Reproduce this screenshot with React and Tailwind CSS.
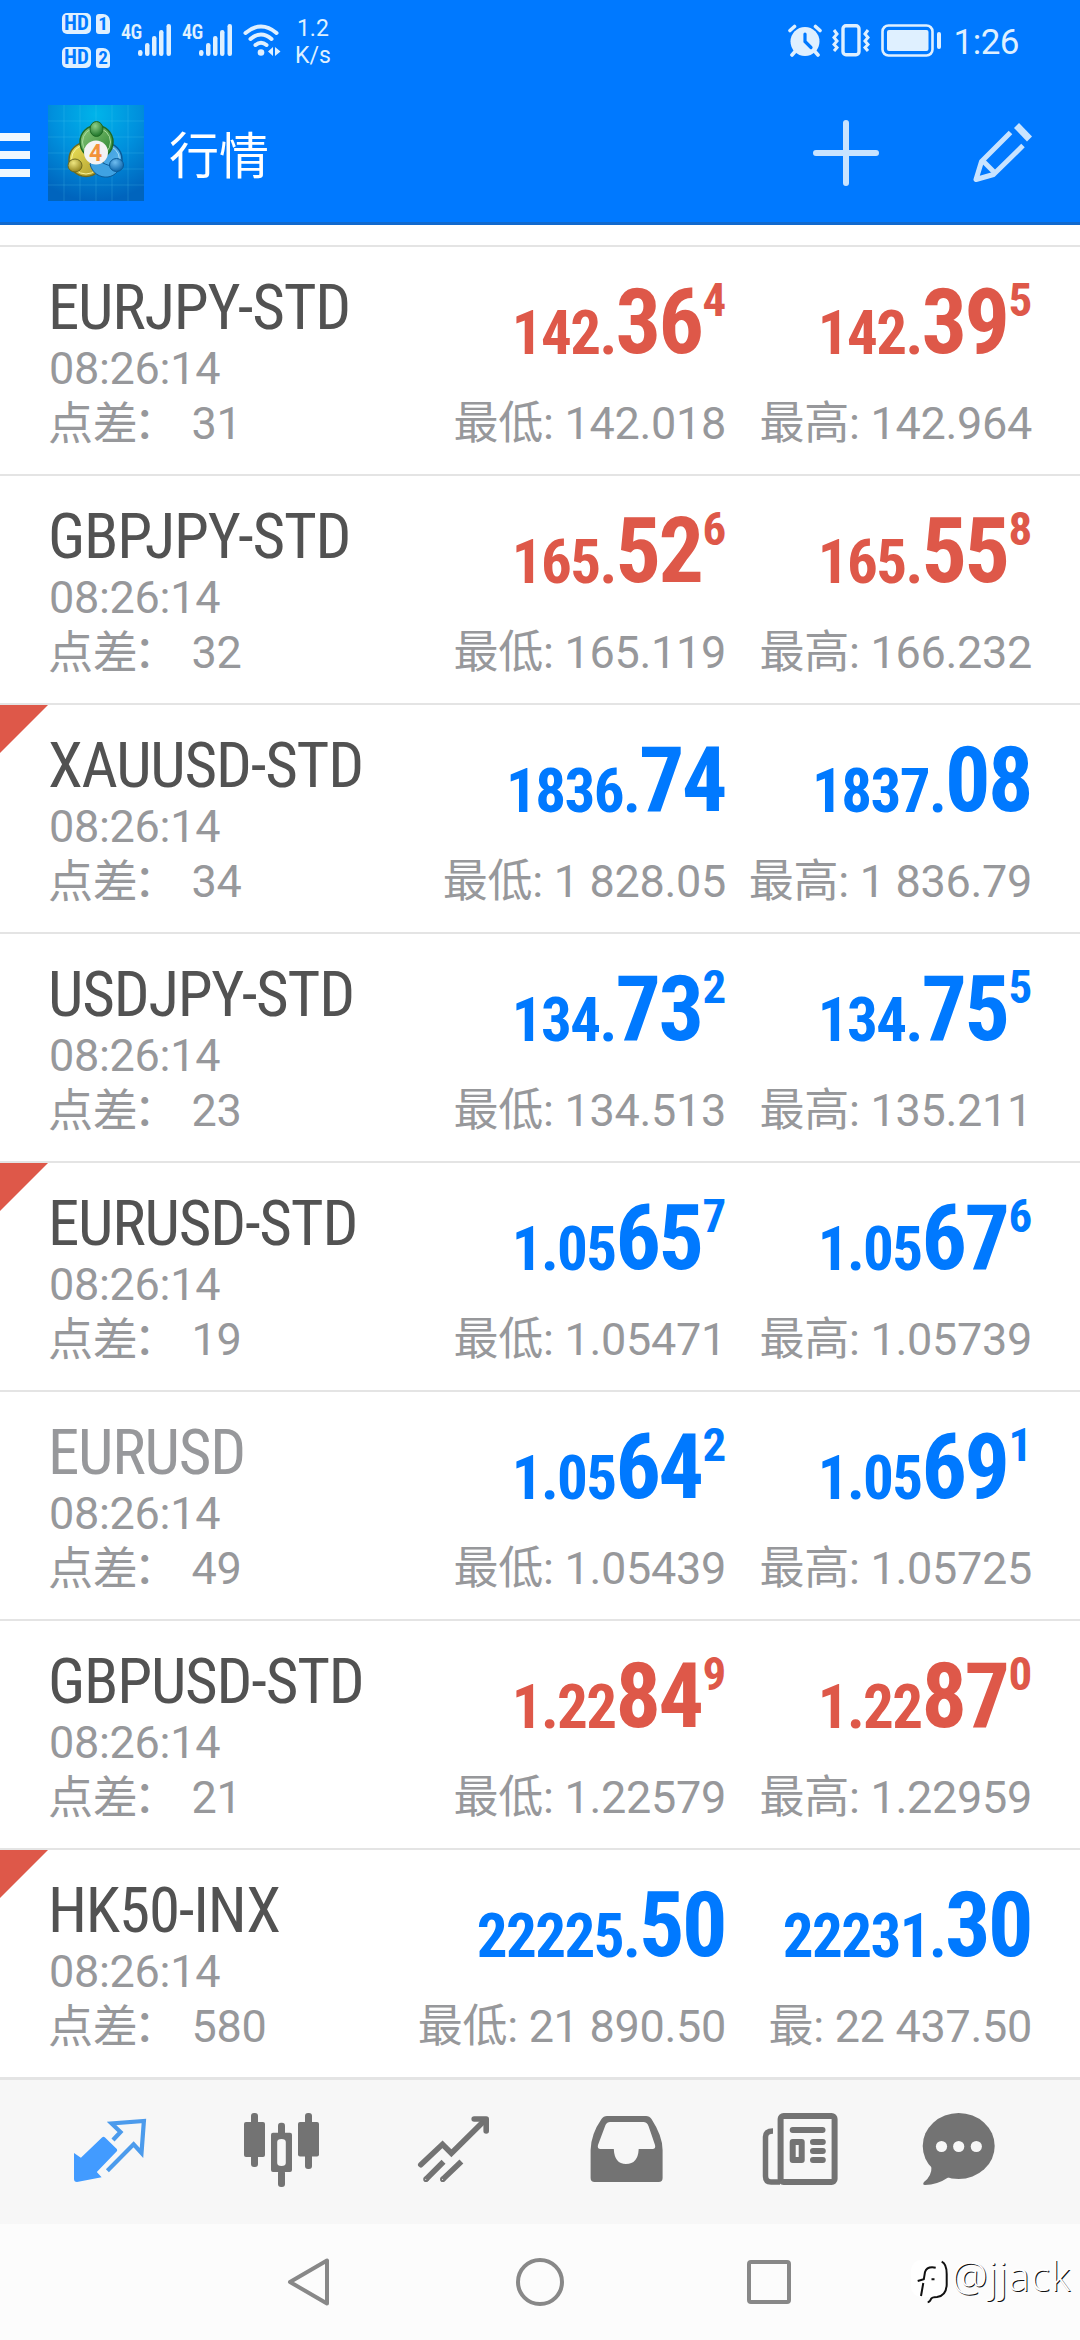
import React from "react";

const quotes = [
  { name: "EURJPY-STD", spread: "31", down: true, bid: ["142.", "36", "4"], ask: ["142.", "39", "5"], low: "142.018", high: "142.964" },
  { name: "GBPJPY-STD", spread: "32", down: true, bid: ["165.", "52", "6"], ask: ["165.", "55", "8"], low: "165.119", high: "166.232" },
  { name: "XAUUSD-STD", spread: "34", flag: true, bid: ["1836.", "74", ""], ask: ["1837.", "08", ""], low: "1 828.05", high: "1 836.79" },
  { name: "USDJPY-STD", spread: "23", bid: ["134.", "73", "2"], ask: ["134.", "75", "5"], low: "134.513", high: "135.211" },
  { name: "EURUSD-STD", spread: "19", flag: true, bid: ["1.05", "65", "7"], ask: ["1.05", "67", "6"], low: "1.05471", high: "1.05739" },
  { name: "EURUSD", spread: "49", muted: true, bid: ["1.05", "64", "2"], ask: ["1.05", "69", "1"], low: "1.05439", high: "1.05725" },
  { name: "GBPUSD-STD", spread: "21", down: true, bid: ["1.22", "84", "9"], ask: ["1.22", "87", "0"], low: "1.22579", high: "1.22959" },
  { name: "HK50-INX", spread: "580", flag: true, bid: ["22225.", "50", ""], ask: ["22231.", "30", ""], low: "21 890.50", high: "22 437.50", highLabel: "最" },
];

const SimBadge = ({ n }) => (
  <div className="flex items-center gap-[5px] h-[21px] text-[#0079ff] font-bold font-['Roboto_Condensed','Roboto',sans-serif] font-stretch-condensed leading-none">
    <span className="w-[29px] h-[21px] rounded-[5px] bg-[#dff0ff] flex items-center justify-center text-[21px]">HD</span>
    <span className="w-[14px] h-[20px] rounded-[3px] rounded-tr-[7px] bg-[#dff0ff] flex items-center justify-center text-[19px]">{n}</span>
  </div>
);

const Signal = () => (
  <div className="flex items-start w-[50px] mr-[11px]">
    <span className="w-[17px] text-[20px] leading-[18px] font-semibold -mt-[1px] tracking-[-0.5px] font-['Roboto_Condensed','Roboto',sans-serif] font-stretch-condensed">4G</span>
    <svg width="33" height="32" viewBox="0 0 33 32" fill="#dff0ff">
      <rect x="0" y="26" width="4.5" height="6" rx="2.2" />
      <rect x="7" y="19" width="4.5" height="13" rx="2.2" />
      <rect x="14" y="12" width="4.5" height="20" rx="2.2" />
      <rect x="21" y="6" width="4.5" height="26" rx="2.2" />
      <rect x="28.5" y="0" width="4.5" height="32" rx="2.2" />
    </svg>
  </div>
);

const StatusBar = () => (
  <div className="h-[78px] pl-[62px] pr-[61px] flex items-start text-[#dff0ff] font-['Roboto',sans-serif]">
    <div className="flex flex-col gap-[13px] mt-[13px] mr-[11px]">
      <SimBadge n="1" />
      <SimBadge n="2" />
    </div>
    <div className="flex mt-[24px]">
      <Signal />
      <Signal />
      <svg width="38" height="32" viewBox="0 0 38 32" fill="none" stroke="#dff0ff" strokeWidth="4" strokeLinecap="round">
        <path d="M2.5 9 Q18 -4 33.5 9" />
        <path d="M7.5 15 Q18 6 28.5 15" />
        <path d="M12.5 21 Q18 16.5 23.5 21" />
        <circle cx="18" cy="28.5" r="3.3" fill="#dff0ff" stroke="none" />
        <path d="M30 23 v9 l-5 -4.5 z M32 23 v9 l5.5 -4.5 z" fill="#dff0ff" stroke="none" />
      </svg>
    </div>
    <div className="ml-[14px] mt-[15px] text-[23px] leading-[27px] text-center">
      <div>1.2</div>
      <div>K/s</div>
    </div>
    <div className="ml-auto flex items-start mt-[24px]">
      <svg width="34" height="33" viewBox="0 0 34 33" fill="#dff0ff">
        <circle cx="17" cy="17.5" r="14.5" />
        <path d="M2 6.5 L6.5 2.5 M32 6.5 L27.5 2.5 M7.5 27 L4 31 M26.5 27 L30 31" stroke="#dff0ff" strokeWidth="3.6" strokeLinecap="round" />
        <path d="M17 10 V17.5 L23 23.5" fill="none" stroke="#0079ff" strokeWidth="3.2" strokeLinecap="round" />
      </svg>
      <svg className="ml-[10px]" width="38" height="33" viewBox="0 0 38 33" fill="none" stroke="#dff0ff" strokeWidth="3.4">
        <rect x="11" y="1.7" width="16" height="29" rx="3" />
        <path d="M2 6 l3 4 l-3 3.5 l3 3.5 l-3 3.5 l3 3 l-3 3.5" strokeWidth="3" />
        <path d="M36 6 l-3 4 l3 3.5 l-3 3.5 l3 3.5 l-3 3 l3 3.5" strokeWidth="3" />
      </svg>
      <svg className="ml-[11px]" width="60" height="33" viewBox="0 0 60 33" fill="none">
        <rect x="1.5" y="1.5" width="50" height="30" rx="6" stroke="#dff0ff" strokeWidth="2.6" />
        <rect x="6" y="6" width="41.5" height="21" rx="2" fill="#dff0ff" />
        <rect x="56" y="8" width="4" height="17" rx="2" fill="#dff0ff" />
      </svg>
      <span className="ml-[13px] text-[35px] leading-[33px] mt-[2px] tracking-[-0.5px]">1:26</span>
    </div>
  </div>
);

const AppLogo = () => (
  <svg width="96" height="96" viewBox="0 0 96 96">
    <defs>
      <radialGradient id="sky" cx="0.5" cy="0.1" r="0.9">
        <stop offset="0" stopColor="#00b4ea" />
        <stop offset="0.5" stopColor="#0090dd" />
        <stop offset="1" stopColor="#0064bd" />
      </radialGradient>
      <linearGradient id="green" x1="0" y1="0" x2="1" y2="1">
        <stop offset="0" stopColor="#8fca7d" />
        <stop offset="1" stopColor="#23802b" />
      </linearGradient>
      <linearGradient id="gold" x1="0" y1="0" x2="1" y2="1">
        <stop offset="0" stopColor="#f0e75a" />
        <stop offset="1" stopColor="#a8952a" />
      </linearGradient>
      <linearGradient id="blue" x1="0" y1="0" x2="1" y2="1">
        <stop offset="0" stopColor="#2c8fd6" />
        <stop offset="1" stopColor="#64bdf0" />
      </linearGradient>
      <radialGradient id="greenHead" cx="0.4" cy="0.3" r="0.7">
        <stop offset="0" stopColor="#8fd08a" />
        <stop offset="1" stopColor="#1c7327" />
      </radialGradient>
      <radialGradient id="goldHead" cx="0.4" cy="0.3" r="0.7">
        <stop offset="0" stopColor="#eee680" />
        <stop offset="1" stopColor="#94851d" />
      </radialGradient>
      <radialGradient id="blueHead" cx="0.4" cy="0.3" r="0.7">
        <stop offset="0" stopColor="#6fbdf0" />
        <stop offset="1" stopColor="#0d66ac" />
      </radialGradient>
    </defs>
    <rect width="96" height="96" fill="url(#sky)" />
    <path d="M16 0V96 M32 0V96 M48 0V96 M64 0V96 M80 0V96 M0 16H96 M0 32H96 M0 48H96 M0 64H96 M0 80H96" stroke="#5fd0f5" strokeOpacity="0.2" />
    <circle cx="57.5" cy="54.5" r="16.5" fill="url(#blue)" stroke="#0a5a98" strokeWidth="1.5" />
    <circle cx="57.5" cy="54.5" r="14" fill="none" stroke="#a5dcf8" strokeWidth="1" />
    <circle cx="38" cy="54.5" r="17" fill="url(#gold)" stroke="#6d6a20" strokeWidth="1.5" />
    <circle cx="38" cy="54.5" r="14.5" fill="none" stroke="#f6f19a" strokeWidth="1" />
    <path d="M42 59 C44 68 52 73 60 72 C66 71 70 67 72 62 C62 62 52 58 48 52 Z" fill="#3fa2e2" stroke="#0a5a98" />
    <circle cx="48.5" cy="37" r="16.5" fill="url(#green)" stroke="#1f6a25" strokeWidth="1.5" />
    <circle cx="48.5" cy="37" r="14" fill="none" stroke="#a8dba0" strokeWidth="1" />
    <ellipse cx="48.5" cy="24" rx="6.5" ry="7.5" fill="url(#greenHead)" stroke="#1f6a25" />
    <ellipse cx="27" cy="60.5" rx="7" ry="6.5" fill="url(#goldHead)" stroke="#6d6a20" />
    <ellipse cx="68.5" cy="60" rx="7" ry="6.5" fill="url(#blueHead)" stroke="#0a5a98" />
    <circle cx="48" cy="47.5" r="12" fill="#f3f3f3" />
    <text x="47.5" y="55.5" textAnchor="middle" fontSize="23" fontWeight="700" fill="#f2923a" fontFamily="Roboto, sans-serif">4</text>
  </svg>
);

const Header = () => (
  <header className="h-[225px] bg-[#0079ff] border-b-[3px] border-[#1169cd]">
    <StatusBar />
    <div className="h-[144px] flex items-start">
      <div className="w-[30px] mt-[55px] flex flex-col gap-[10px]">
        <div className="h-[8px] bg-[#f0f8ff]"></div>
        <div className="h-[8px] bg-[#f0f8ff]"></div>
        <div className="h-[8px] bg-[#f0f8ff]"></div>
      </div>
      <div className="ml-[18px] mt-[27px]">
        <AppLogo />
      </div>
      <h1 className="ml-[25px] mt-[44px] text-[50px] leading-[70px] text-white font-['Roboto','Noto_Sans_CJK_SC',sans-serif]">行情</h1>
      <svg className="ml-auto mr-[94px] mt-[42px]" width="66" height="66" viewBox="0 0 66 66" stroke="#c8e3ff" strokeWidth="6" strokeLinecap="round">
        <path d="M33 3V63 M3 33H63" />
      </svg>
      <svg className="mr-[47px] mt-[44px]" width="60" height="62" viewBox="0 0 60 62" fill="none" stroke="#c8e3ff" strokeWidth="5">
        <path d="M37.5 10.5 L8.5 39.5 L3 57.5 L20.5 52.5 L50 23.5" strokeLinejoin="round" />
        <path d="M8.5 37.5 L22.5 51.5" />
        <path d="M43.5 3.5 L56.5 17" strokeWidth="7" />
      </svg>
    </div>
  </header>
);

const Price = ({ parts }) => (
  <div className="flex justify-end items-start font-bold font-['Roboto_Condensed','Roboto',sans-serif] font-stretch-condensed">
    <span className="text-[61px] leading-[90px] mt-[41px] tracking-[-1.6px]">{parts[0]}</span>
    <span className="text-[90px] leading-[90px] mt-[31px] tracking-[-2.5px] mr-[1px]">{parts[1]}</span>
    <span className="text-[47px] leading-[50px] mt-[28px]">{parts[2]}</span>
  </div>
);

const QuoteRow = ({ quote }) => (
  <div className="relative h-[229px] border-b-2 border-[#e4e4e4] flex pl-[49px] pr-[48px] whitespace-nowrap text-[45px] leading-[55px] tracking-[-0.3px]">
    {quote.flag && (
      <svg className="absolute left-0 top-0" width="48" height="48" viewBox="0 0 48 48">
        <path d="M0 0H48L0 48Z" fill="#de5849" />
      </svg>
    )}
    <div className="pt-[27px] w-[330px] text-[#97989b]">
      <div className={`-ml-[1px] text-[63px] leading-[67px] tracking-[-1.2px] font-['Roboto_Condensed','Roboto',sans-serif] font-stretch-condensed ${quote.muted ? "text-[#97989b]" : "text-[#525252]"}`}>{quote.name}</div>
      <div>08:26:14</div>
      <div className="flex">
        <span className="mt-[1px] -ml-[1px]">点差</span>
        <span className="-ml-[4px] w-[58px]">：</span>
        <span>{quote.spread}</span>
      </div>
    </div>
    <div className="flex-1 grid grid-cols-[1fr_306px] content-start text-right text-[#97989b]">
      <div className={`h-[149px] ${quote.down ? "text-[#de5849]" : "text-[#0079ff]"}`}><Price parts={quote.bid} /></div>
      <div className={`h-[149px] ${quote.down ? "text-[#de5849]" : "text-[#0079ff]"}`}><Price parts={quote.ask} /></div>
      <div>最低: {quote.low}</div>
      <div>{quote.highLabel || "最高"}: {quote.high}</div>
    </div>
  </div>
);

const TabBar = () => (
  <nav className="h-[147px] border-t-[3px] border-[#e4e4e4] bg-[#f7f7f7] -mt-[2px] relative flex items-start pl-[70px] pt-[30px] text-[#737373]">
    {/* Quotes */}
    <svg width="80" height="80" viewBox="0 0 80 80">
      <path d="M4 43 L10.9 47.7 L32 27.5 Q33.5 26.2 35 27.5 L46.8 39 Q47.7 40.3 46.8 41.3 L26.8 62 L31.6 67.3 L7 72 Q4 72 4 69 Z" fill="#429bff" />
      <path d="M43 30 L50.5 22 L41.6 13.5 L73.9 11 L71.5 43 L63.6 34.3 L37.4 60.7" fill="none" stroke="#4c9bec" strokeWidth="4.2" />
    </svg>
    {/* Chart */}
    <svg className="ml-[92px]" width="80" height="80" viewBox="0 0 80 80" fill="currentColor">
      <rect x="9" y="3" width="7" height="54" rx="3" />
      <rect x="2" y="12" width="21" height="35" rx="2" />
      <rect x="36" y="12.7" width="7" height="14" rx="3" />
      <rect x="36" y="60" width="7" height="17" rx="3" />
      <path fillRule="evenodd" d="M31 22.7 H48 Q50 22.7 50 24.7 V60 Q50 62 48 62 H31 Q29 62 29 60 V24.7 Q29 22.7 31 22.7 Z M39.5 29 Q35.2 29 35.2 32 V53 Q35.2 56 39.5 56 Q43.8 56 43.8 53 V32 Q43.8 29 39.5 29 Z" />
      <rect x="63" y="3" width="7" height="56" rx="3" />
      <rect x="56" y="12" width="21" height="34.5" rx="2" />
    </svg>
    {/* Trade */}
    <svg className="ml-[92px]" width="80" height="80" viewBox="0 0 80 80" fill="none" stroke="currentColor" strokeWidth="5.6">
      <path d="M6.8 54.7 L28.5 34.3 L37.4 43.3 L71 10" strokeLinecap="round" />
      <path d="M60.2 9 H72.2 V21" strokeLinecap="round" strokeLinejoin="round" />
      <path d="M12 69.3 L29.5 51.7 M28.8 69.3 L47.4 51.5" />
      <circle cx="12" cy="69.3" r="1" strokeWidth="3.6" />
      <circle cx="28.8" cy="69.3" r="1" strokeWidth="3.6" />
    </svg>
    {/* History */}
    <svg className="ml-[93px]" width="80" height="80" viewBox="0 0 80 80" fill="currentColor">
      <path fillRule="evenodd" d="M20 6 H59 Q62.5 6 64.5 9 Q75.6 26 75.6 40 V68 Q75.6 72 71.6 72 H7.6 Q3.6 72 3.6 68 V40 Q4 24 14.5 9 Q16.5 6 20 6 Z M23 12 Q20 12 18.5 15 L11 35 Q10 39 13.5 39 H26.8 Q27.5 54 39 54 Q51 54 51.7 39 H65.5 Q69 39 68 35 L61.5 16 Q60 12 56.3 12 Z" />
    </svg>
    {/* News */}
    <svg className="ml-[93px]" width="80" height="80" viewBox="0 0 80 80" fill="none" stroke="currentColor" strokeWidth="6">
      <rect x="20.6" y="6" width="54" height="66" rx="3" />
      <path d="M13 21 Q5.5 21 5.5 27 V66 Q5.5 72 11 72 H20" strokeWidth="5.5" />
      <path d="M32.7 20 H62.5 M53 32 H62.8 M53 41 H62.8 M53 50 H62.8" strokeLinecap="round" />
      <rect x="32.7" y="32" width="9" height="18" strokeLinejoin="round" />
    </svg>
    {/* Messages */}
    <svg className="ml-[79px]" width="80" height="80" viewBox="0 0 80 80" fill="currentColor">
      <ellipse cx="39.7" cy="36" rx="36" ry="33" />
      <path d="M12.5 56 Q13 66 5 72 Q3 75 6 75 Q18 75 30 67 Z" />
      <g fill="#f7f7f7">
        <circle cx="22.5" cy="36.5" r="5.6" />
        <circle cx="39.7" cy="36.5" r="5.6" />
        <circle cx="57.3" cy="36.5" r="5.6" />
      </g>
    </svg>
  </nav>
);

const SystemNav = () => (
  <div className="h-[116px] bg-[#fcfcfc] flex items-start pt-[34px] pl-[287px]">
    <svg width="44" height="48" viewBox="0 0 44 48" fill="none" stroke="#888888" strokeWidth="4" strokeLinejoin="round">
      <path d="M3 24 L40 2.5 V45.5 Z" />
    </svg>
    <svg className="ml-[185px]" width="48" height="48" viewBox="0 0 48 48" fill="none" stroke="#888888" strokeWidth="4">
      <circle cx="24" cy="24" r="22" />
    </svg>
    <svg className="ml-[183px]" width="44" height="48" viewBox="0 0 44 48" fill="none" stroke="#888888" strokeWidth="4">
      <rect x="2" y="4" width="40" height="40" rx="2" />
    </svg>
    {/* Watermark */}
    <div className="flex ml-[120px] text-[40px] leading-[40px] tracking-[1px] text-white font-light [text-shadow:1px_1px_0_#111] font-['Open_Sans',sans-serif]">
      <svg width="41" height="46" viewBox="0 0 41 46" fill="none" stroke="#111111" strokeWidth="2">
        <rect x="0" y="2" width="36" height="37" rx="10" fill="#ffffff" stroke="none" />
        <path d="M24.7 9.7 Q16 8 14 14 L12.8 21.3 L6.7 23 M12.3 25 L10 38 M20.5 21.3 H23.5" />
        <path d="M30.7 3.7 Q35.7 6 35.7 16 V27 Q35 38 26 39 Q21 39 20 41 Q19 44 16.7 44.3" />
      </svg>
      <span className="whitespace-nowrap -mt-[2px]">@jjack</span>
    </div>
  </div>
);

export default function App() {
  return (
    <div className="w-[1080px] h-[2340px] overflow-hidden bg-white flex flex-col font-['Roboto','Noto_Sans_CJK_SC',sans-serif]">
      <Header />
      <div className="h-[22px] border-b-2 border-[#e4e4e4]"></div>
      <main>
        {quotes.map((quote) => (
          <QuoteRow key={quote.name} quote={quote} />
        ))}
      </main>
      <TabBar />
      <SystemNav />
    </div>
  );
}
